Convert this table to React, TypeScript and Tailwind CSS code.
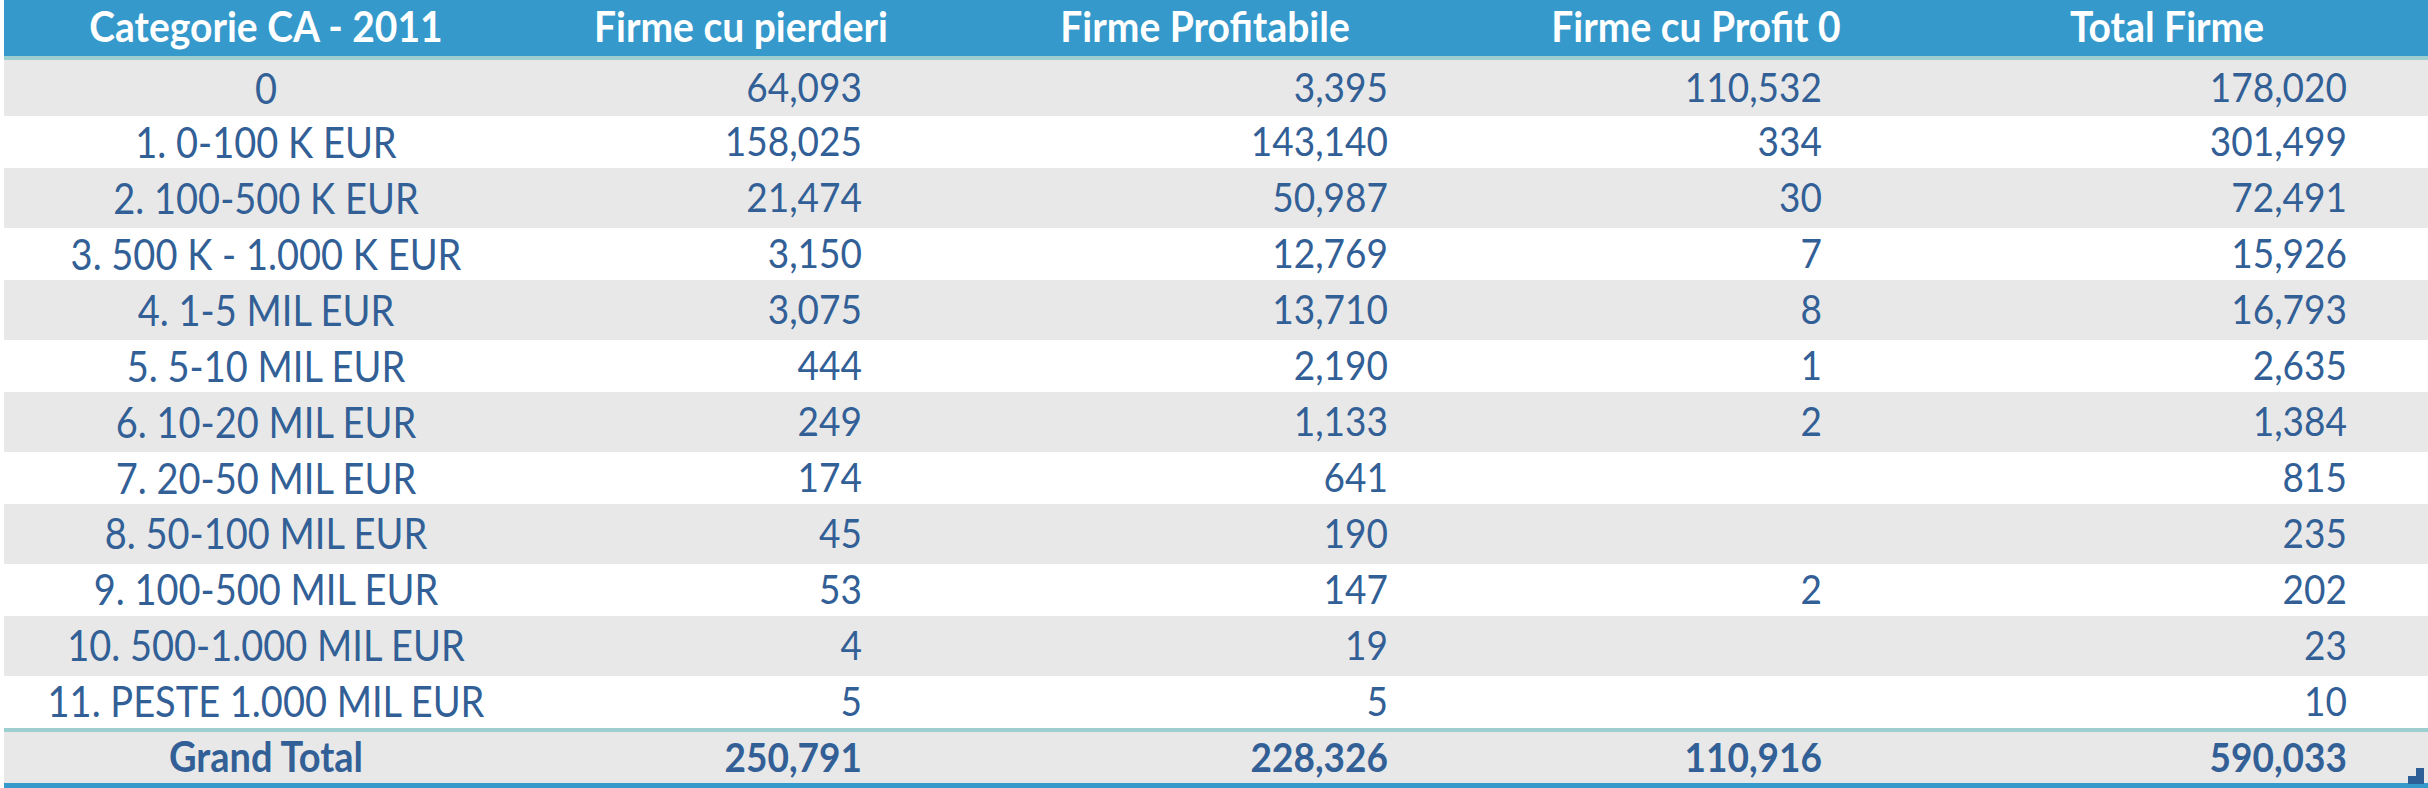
const rows: [string, string, string, string, string][] = [
  ["0", "64,093", "3,395", "110,532", "178,020"],
  ["1. 0-100 K EUR", "158,025", "143,140", "334", "301,499"],
  ["2. 100-500 K EUR", "21,474", "50,987", "30", "72,491"],
  ["3. 500 K - 1.000 K EUR", "3,150", "12,769", "7", "15,926"],
  ["4. 1-5 MIL EUR", "3,075", "13,710", "8", "16,793"],
  ["5. 5-10 MIL EUR", "444", "2,190", "1", "2,635"],
  ["6. 10-20 MIL EUR", "249", "1,133", "2", "1,384"],
  ["7. 20-50 MIL EUR", "174", "641", "", "815"],
  ["8. 50-100 MIL EUR", "45", "190", "", "235"],
  ["9. 100-500 MIL EUR", "53", "147", "2", "202"],
  ["10. 500-1.000 MIL EUR", "4", "19", "", "23"],
  ["11. PESTE 1.000 MIL EUR", "5", "5", "", "10"],
];

const grid = "grid grid-cols-[524px_426px_502px_480px_1fr] items-center";

function Txt({ children }: { children: React.ReactNode }) {
  return <span className="inline-block scale-y-[1.1]">{children}</span>;
}

function Row({ cells, bold, className }: { cells: string[]; bold?: boolean; className: string }) {
  return (
    <div className={`${grid} ${className} ${bold ? "font-bold" : ""} pb-[3px]`}>
      <div className="text-center text-[38px]"><Txt>{cells[0]}</Txt></div>
      <div className="text-right pr-[92px]"><Txt>{cells[1]}</Txt></div>
      <div className="text-right pr-[68px]"><Txt>{cells[2]}</Txt></div>
      <div className="text-right pr-[114px]"><Txt>{cells[3]}</Txt></div>
      <div className="text-right pr-[81px]"><Txt>{cells[4]}</Txt></div>
    </div>
  );
}

export default function App() {
  return (
    <div className="relative h-[788px] w-[2428px] bg-white pl-[4px] font-['Lato',sans-serif] text-[37px] leading-none text-[#326096]">
      <div className="flex flex-col">
        <div className={`${grid} h-[60px] border-b-4 border-[#9dcfd0] bg-[#3599cc] pb-[3px] text-[39px] font-bold text-white`}>
          <div className="text-center"><Txt>Categorie CA - 2011</Txt></div>
          <div className="text-center"><Txt>Firme cu pierderi</Txt></div>
          <div className="text-center"><Txt>Firme Profitabile</Txt></div>
          <div className="text-center"><Txt>Firme cu Profit 0</Txt></div>
          <div className="text-center pr-[30px]"><Txt>Total Firme</Txt></div>
        </div>
        {rows.map((r, i) => (
          <Row
            key={r[0]}
            cells={r}
            className={i === 0 ? "h-[56px] bg-[#e8e8e8]" : i % 2 === 1 ? "h-[52px] bg-white" : "h-[60px] bg-[#e8e8e8]"}
          />
        ))}
        <Row
          bold
          cells={["Grand Total", "250,791", "228,326", "110,916", "590,033"]}
          className="h-[60px] border-t-4 border-b-[5px] border-t-[#9dcfd0] border-b-[#3599cc] bg-[#e8e8e8]"
        />
      </div>
      <svg className="absolute bottom-[4px] right-[4px]" width="16" height="16" viewBox="0 0 16 16">
        <rect x="8" y="0" width="8" height="8" fill="#2e5f96" />
        <rect x="0" y="8" width="16" height="8" fill="#2e5f96" />
      </svg>
    </div>
  );
}
